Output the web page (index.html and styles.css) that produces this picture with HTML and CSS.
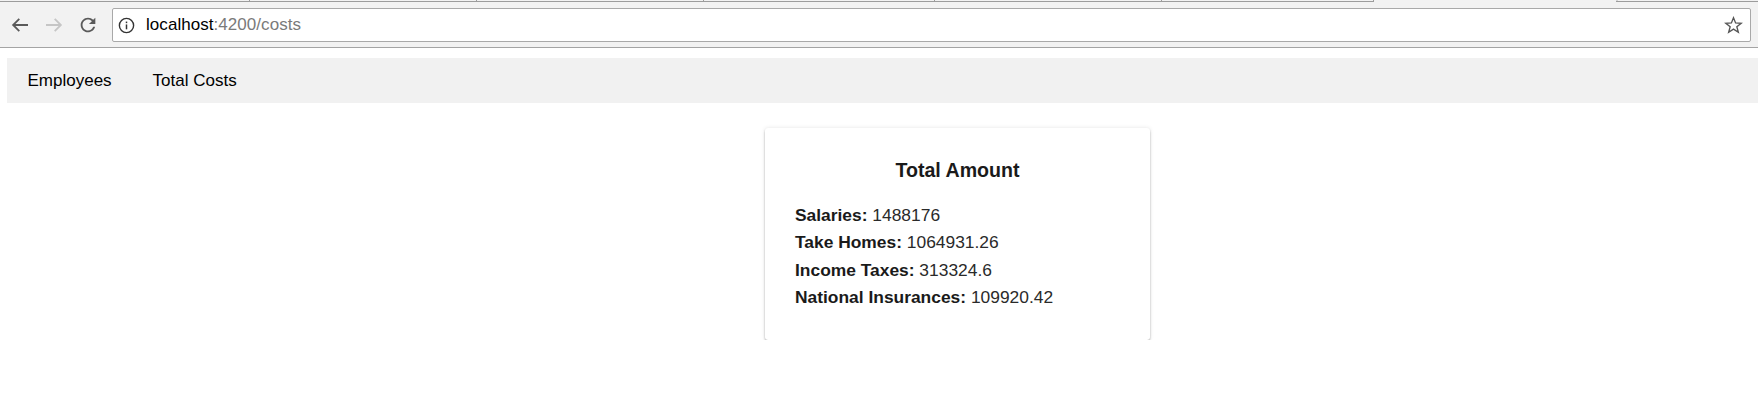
FILE: index.html
```html
<!DOCTYPE html>
<html lang="en">
<head>
<meta charset="utf-8">
<title>Costs</title>
<link rel="stylesheet" href="styles.css">
</head>
<body>
<header class="chrome">
  <div class="tabs">
    <span class="tab"></span><span class="tab"></span><span class="tab"></span><span class="tab"></span><span class="tab"></span><span class="tab"></span>
    <span class="tab-active"></span>
    <span class="tab-rest"></span>
  </div>
  <div class="toolbar">
    <span class="btn">
      <svg width="18" height="18" viewBox="0 0 18 18"><path d="M17 9H2.2M8.3 2.8 2.1 9l6.2 6.2" fill="none" stroke="#5a5a5a" stroke-width="1.8"/></svg>
    </span>
    <span class="btn">
      <svg width="18" height="18" viewBox="0 0 18 18"><path d="M1 9h14.8M9.7 2.8 15.9 9l-6.2 6.2" fill="none" stroke="#c6c6c6" stroke-width="1.8"/></svg>
    </span>
    <span class="btn">
      <svg width="22" height="22" viewBox="0 0 24 24"><path fill="#5a5a5a" d="M17.65 6.35C16.2 4.9 14.21 4 12 4c-4.42 0-7.99 3.58-7.99 8s3.57 8 7.99 8c3.730 0 6.84-2.55 7.73-6h-2.08c-.82 2.33-3.04 4-5.65 4-3.31 0-6-2.69-6-6s2.69-6 6-6c1.66 0 3.14.69 4.22 1.78L13 11h7V4l-2.35 2.35z"/></svg>
    </span>
    <div class="omnibox">
      <svg class="info" width="17" height="17" viewBox="0 0 16 16"><circle cx="8" cy="8" r="6.7" fill="none" stroke="#333" stroke-width="1.3"/><rect x="7.3" y="7" width="1.4" height="4.6" fill="#333"/><rect x="7.3" y="4.3" width="1.4" height="1.5" fill="#333"/></svg>
      <span class="url"><span class="host">localhost</span><span class="path">:4200/costs</span></span>
      <svg class="star" width="19" height="19" viewBox="0 0 20 20"><polygon points="10,1.8 12.2,7.3 18.1,7.6 13.5,11.3 15.1,17.1 10,13.8 4.9,17.1 6.5,11.3 1.9,7.6 7.8,7.3" fill="none" stroke="#555" stroke-width="1.4" stroke-linejoin="miter"/></svg>
    </div>
  </div>
</header>
<main class="page">
  <nav class="navbar">
    <a class="nav-link">Employees</a>
    <a class="nav-link">Total Costs</a>
  </nav>
  <section class="content">
    <div class="card">
      <h2 class="card-title">Total Amount</h2>
      <div class="row"><b>Salaries:</b> 1488176</div>
      <div class="row"><b>Take Homes:</b> 1064931.26</div>
      <div class="row"><b>Income Taxes:</b> 313324.6</div>
      <div class="row"><b>National Insurances:</b> 109920.42</div>
    </div>
  </section>
</main>
</body>
</html>
```

FILE: styles.css
```css
* { box-sizing: border-box; }
html, body {
  margin: 0;
  background: #fff;
  font-family: "Liberation Sans", Arial, sans-serif;
  color: #212121;
}
.chrome {
  background: #f2f2f2;
  border-bottom: 1px solid #a4a4a4;
  height: 48px;
}
.tabs {
  display: flex;
  height: 2px;
}
.tab {
  height: 2px;
  border-bottom: 1px solid #9c9c9c;
  border-right: 1px solid #9c9c9c;
}
.tab:nth-child(1) { width: 250px; }
.tab:nth-child(2) { width: 227px; }
.tab:nth-child(3) { width: 227px; }
.tab:nth-child(4) { width: 231px; }
.tab:nth-child(5) { width: 227px; }
.tab:nth-child(6) { width: 212px; }
.tab-active { width: 242px; }
.tab-rest {
  flex: 1;
  height: 2px;
  border-bottom: 1px solid #9c9c9c;
  border-left: 1px solid #9c9c9c;
  border-top-left-radius: 2px;
}
.toolbar {
  display: flex;
  align-items: center;
  padding: 6px 7px 0 3px;
}
.btn {
  width: 34px;
  height: 33px;
  display: flex;
  align-items: center;
  justify-content: center;
}
.omnibox {
  flex: 1;
  margin-left: 7px;
  height: 34px;
  background: #fff;
  border: 1px solid #a9a9a9;
  border-radius: 2px;
  display: flex;
  align-items: center;
  padding: 0 7px 0 5px;
}
.info { flex: none; }
.url {
  flex: 1;
  margin-left: 11px;
  font-size: 17px;
  letter-spacing: 0.05px;
}
.host { color: #000; }
.path { color: #7a7a7a; }
.star { flex: none; }
.page {
  padding: 10px 0 0 7px;
}
.navbar {
  display: flex;
  align-items: center;
  height: 45px;
  background: #f1f1f1;
}
.nav-link {
  padding: 0 20.5px;
  font-size: 17px;
  color: #000;
  cursor: pointer;
}
.content {
  padding: 25px 0 0 758px;
}
.card {
  width: 385px;
  background: #fff;
  border-radius: 3px;
  padding: 30px 30px 28px 30px;
  box-shadow: 0 2px 3px -1px rgba(0,0,0,.35), 0 1px 2px 0 rgba(0,0,0,.14), 0 0 4px 0 rgba(0,0,0,.1);
}
.card-title {
  margin: 0 0 20px 0;
  text-align: center;
  font-size: 19.6px;
  line-height: 24px;
  font-weight: bold;
  color: #1a1a1a;
}
.row {
  font-size: 17.4px;
  line-height: 27.4px;
  color: #2a2a2a;
}
.row b { color: #1a1a1a; }
```
